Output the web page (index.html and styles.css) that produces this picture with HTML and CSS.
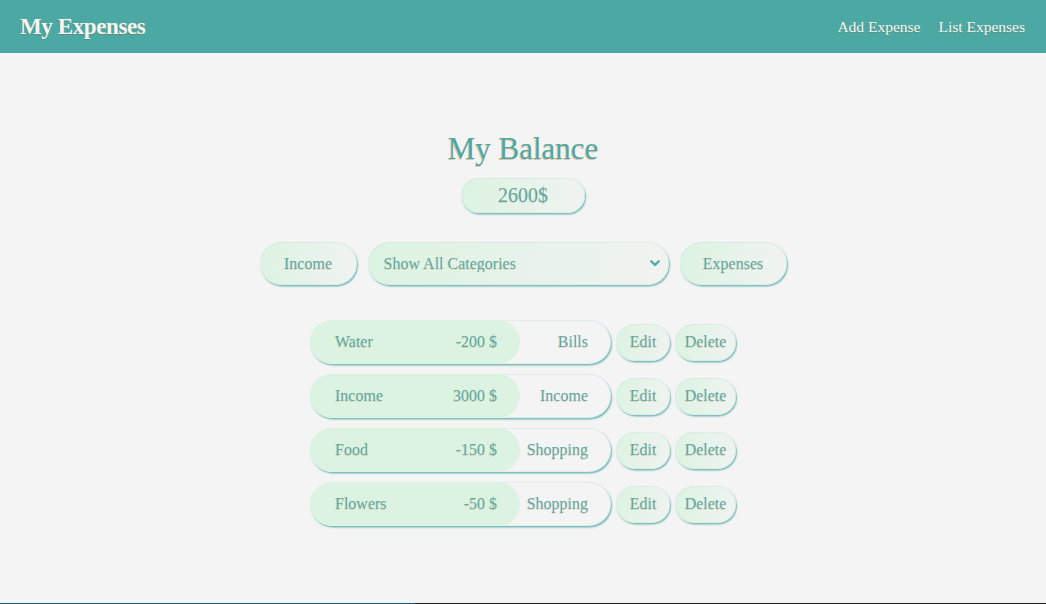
FILE: index.html
```html
<!DOCTYPE html>
<html lang="en">
<head>
<meta charset="utf-8">
<title>My Expenses</title>
<link rel="stylesheet" href="styles.css">
</head>
<body>
<nav class="navbar">
  <a class="brand" href="#">My Expenses</a>
  <div class="nav-links">
    <a href="#">Add Expense</a>
    <a href="#">List Expenses</a>
  </div>
</nav>
<main class="main">
  <h1 class="title">My Balance</h1>
  <div class="pill balance">2600$</div>
  <div class="controls">
    <button class="pill btn-lg btn-income">Income</button>
    <div class="select-wrap">
      <select class="pill select">
        <option>Show All Categories</option>
      </select>
      <svg class="chev" width="10" height="7" viewBox="0 0 10 7"><path d="M1.2 1.2 L5 5 L8.8 1.2" fill="none" stroke="#4ba8a3" stroke-width="2.2" stroke-linecap="round" stroke-linejoin="round"/></svg>
    </div>
    <button class="pill btn-lg btn-expenses">Expenses</button>
  </div>
  <ul class="list">
    <li class="item">
      <div class="entry">
        <div class="entry-main"><span>Water</span><span>-200 $</span></div>
        <div class="entry-cat">Bills</div>
      </div>
      <button class="pill btn-sm btn-edit">Edit</button>
      <button class="pill btn-sm btn-del">Delete</button>
    </li>
    <li class="item">
      <div class="entry">
        <div class="entry-main"><span>Income</span><span>3000 $</span></div>
        <div class="entry-cat">Income</div>
      </div>
      <button class="pill btn-sm btn-edit">Edit</button>
      <button class="pill btn-sm btn-del">Delete</button>
    </li>
    <li class="item">
      <div class="entry">
        <div class="entry-main"><span>Food</span><span>-150 $</span></div>
        <div class="entry-cat">Shopping</div>
      </div>
      <button class="pill btn-sm btn-edit">Edit</button>
      <button class="pill btn-sm btn-del">Delete</button>
    </li>
    <li class="item">
      <div class="entry">
        <div class="entry-main"><span>Flowers</span><span>-50 $</span></div>
        <div class="entry-cat">Shopping</div>
      </div>
      <button class="pill btn-sm btn-edit">Edit</button>
      <button class="pill btn-sm btn-del">Delete</button>
    </li>
  </ul>
</main>
<footer class="footer"><div class="footer-left"></div></footer>
</body>
</html>
```

FILE: styles.css
```css
* { box-sizing: border-box; }
html, body { margin: 0; padding: 0; }
body {
  background: #f4f4f4;
  font-family: "Liberation Serif", "Times New Roman", serif;
  color: #5aa9a3;
}
.navbar {
  height: 53px;
  background: #4ba8a3;
  display: flex;
  align-items: center;
  justify-content: space-between;
  padding: 0 21px 0 20px;
}
.brand {
  color: #f6f4ee;
  font-size: 23px;
  font-weight: bold;
  text-decoration: none;
  letter-spacing: -0.4px;
  text-shadow: -0.5px 0.5px rgba(120, 90, 60, 0.35);
  padding-top: 1px;
}
.nav-links { display: flex; gap: 18px; }
.nav-links a {
  color: #f6f4ee;
  font-size: 15.5px;
  text-decoration: none;
  text-shadow: -0.5px 0.5px rgba(120, 90, 60, 0.3);
}
.main {
  min-height: 550px;
  display: flex;
  flex-direction: column;
  align-items: center;
  padding-top: 78px;
}
.title {
  margin: 0;
  font-size: 31px;
  line-height: 36px;
  font-weight: normal;
  color: #4ba8a3;
  text-shadow: -0.7px 0.5px rgba(225, 150, 95, 0.55);
}
.pill {
  border-radius: 999px;
  border: 1px solid rgba(75, 168, 163, 0.08);
  background: linear-gradient(100deg, #dcf3e2 0%, #f1f3f1 100%);
  box-shadow: 1px 1.5px 1.5px rgba(75, 168, 163, 0.75);
  color: #5aa9a3;
  font-family: inherit;
  text-shadow: -0.5px 0.5px rgba(225, 150, 95, 0.35);
}
.balance {
  margin-top: 11px;
  width: 124px;
  height: 35px;
  display: flex;
  align-items: center;
  justify-content: center;
  font-size: 20px;
}
.controls {
  margin-top: 29px;
  display: flex;
  gap: 11px;
  align-items: center;
}
.btn-lg {
  height: 43px;
  font-size: 16px;
  padding: 0;
}
.btn-income { width: 97px; }
.btn-expenses { width: 107px; }
.select-wrap {
  position: relative;
  width: 301px;
  height: 43px;
}
.select {
  appearance: none;
  -webkit-appearance: none;
  width: 100%;
  height: 100%;
  font-size: 16px;
  padding: 0 30px 0 15px;
  outline: none;
}
.chev {
  position: absolute;
  right: 9px;
  top: 18px;
  pointer-events: none;
}
.list {
  list-style: none;
  margin: 35px 0 0;
  padding: 0;
  display: flex;
  flex-direction: column;
  gap: 10px;
}
.item {
  display: flex;
  align-items: center;
  gap: 5px;
}
.entry {
  width: 301px;
  height: 44px;
  border-radius: 999px;
  background: #f4f4f4;
  border: 1px solid rgba(75, 168, 163, 0.1);
  box-shadow: 1px 1.5px 1.5px rgba(75, 168, 163, 0.75);
  display: flex;
  align-items: stretch;
  font-size: 16px;
  text-shadow: -0.5px 0.5px rgba(225, 150, 95, 0.35);
}
.entry-main {
  width: 210px;
  margin: -1px 0 -1px -1px;
  border-radius: 999px;
  background: #dcf3e2;
  display: flex;
  align-items: center;
  justify-content: space-between;
  padding: 0 23px 0 25px;
}
.entry-cat {
  flex: 1;
  display: flex;
  align-items: center;
  justify-content: flex-end;
  padding-right: 22px;
}
.btn-sm {
  height: 37px;
  font-size: 16px;
  padding: 0;
}
.btn-edit { width: 54px; }
.btn-del { width: 61px; }
.footer {
  height: 30px;
  background: #1f1f1f;
}
.footer-left {
  width: 415px;
  height: 100%;
  background: #0b5878;
}
```
